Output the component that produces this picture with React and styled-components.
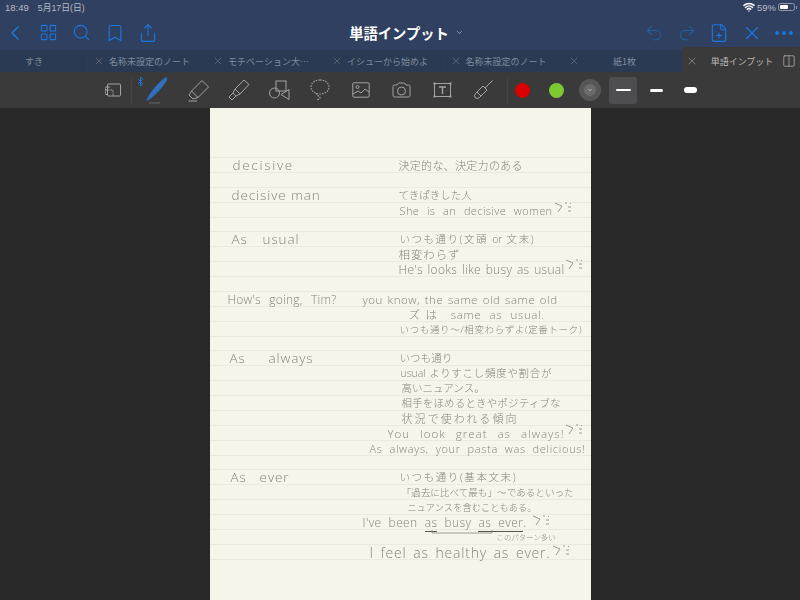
import styled, { createGlobalStyle } from 'styled-components';
import {
  Bluetooth,
  Bookmark,
  ChevronDown,
  ChevronLeft,
  Columns2,
  Ellipsis,
  FilePlus,
  LayoutGrid,
  Redo2,
  Search,
  Share,
  Undo2,
  Wifi,
  X,
} from 'lucide-react';

const GlobalStyle = createGlobalStyle`
  html, body {
    margin: 0;
    padding: 0;
    background: #282828;
    font-family: "Noto Sans CJK JP", "Liberation Sans", sans-serif;
  }
`;

const Page = styled.div`
  display: flex;
  flex-direction: column;
  width: 800px;
  height: 600px;
  overflow: hidden;
  background: #282828;
`;

const Header = styled.div`
  background: #2f4060;
`;

const StatusBar = styled.div`
  display: flex;
  align-items: center;
  box-sizing: border-box;
  height: 15px;
  padding: 0 3px 1px 5px;
  color: #b4bbc8;
  font-family: "Liberation Sans", "Noto Sans CJK JP", sans-serif;
  font-size: 9.5px;
`;

const StatusDate = styled.span`
  margin-left: 9px;
  flex: 1;
  font-size: 8.8px;
`;

const StatusPercent = styled.span`
  margin-left: 2px;
`;

const Battery = styled.div`
  display: flex;
  align-items: center;
  width: 17px;
  height: 8px;
  margin-left: 2px;
  padding: 1px;
  border: 1px solid #8e97a8;
  border-radius: 2.5px;
  box-sizing: border-box;

  &::before {
    content: '';
    display: block;
    width: 59%;
    height: 100%;
    background: #ffffff;
    border-radius: 1px;
  }
`;

const BatteryTip = styled.div`
  width: 1px;
  height: 3px;
  margin-left: 1px;
  background: #8e97a8;
`;

const NavBar = styled.div`
  display: grid;
  grid-template-columns: 1fr auto 1fr;
  align-items: center;
  height: 35px;
`;

const NavGroup = styled.div`
  display: flex;
  align-items: center;
  justify-content: ${(p) => (p.$end ? 'flex-end' : 'flex-start')};
  gap: ${(p) => (p.$end ? '15.5px' : '16px')};
  padding: ${(p) => (p.$end ? '0 7.5px 0 0' : '0 0 0 6px')};
`;

const NavIcon = styled.div`
  display: flex;
  justify-content: center;
  width: ${(p) => p.$w || 17}px;
  color: ${(p) => (p.$dim ? '#235f9f' : '#1b78e0')};

  svg {
    flex-shrink: 0;
  }
`;

const Title = styled.div`
  display: flex;
  align-items: center;
  gap: 6px;
  padding-left: 13px;
  color: #ffffff;
  font-size: 14.3px;
  font-weight: 700;

  svg {
    color: #aab2c0;
  }
`;

const TabBar = styled.div`
  display: flex;
  height: 22px;
  background: #2b3a53;
`;

const Tab = styled.div`
  display: flex;
  align-items: center;
  flex-shrink: 0;
  box-sizing: border-box;
  width: ${(p) => p.$w}px;
  height: ${(p) => (p.$active ? 25 : 22)}px;
  margin-top: ${(p) => (p.$active ? -3 : 0)}px;
  padding: ${(p) => (p.$active ? '3px 4px 0 4px' : '0 12px 0 5px')};
  color: ${(p) => (p.$active ? '#b9b9b9' : '#7f8a9c')};
  background: ${(p) => (p.$active ? '#3a3a3a' : 'transparent')};
  border-right: ${(p) => (p.$active ? 'none' : '1px solid #2d3c56')};
  font-size: 9px;
  white-space: nowrap;

  svg {
    flex-shrink: 0;
  }
`;

const TabLabel = styled.span`
  flex: 1;
  text-align: center;
  padding: 0 ${(p) => p.$r || 0}px 0 ${(p) => p.$l || 0}px;
`;

const Toolbar = styled.div`
  display: flex;
  align-items: center;
  height: 36px;
  padding-left: 93px;
  background: #3a3a3a;
`;

const ToolSlot = styled.div`
  display: flex;
  justify-content: center;
  align-items: center;
  flex-shrink: 0;
  position: relative;
  width: ${(p) => p.$w || 40.7}px;
  height: 36px;
  color: #a3a3a3;
`;

const BtBadge = styled.div`
  display: flex;
  position: absolute;
  left: -2px;
  top: 4px;
  color: #1b78e0;
`;

const ToolDivider = styled.div`
  flex-shrink: 0;
  width: 1px;
  height: 27px;
  margin: 0 ${(p) => p.$r}px 0 ${(p) => p.$l}px;
  background: #444444;
`;

const Swatch = styled.div`
  width: 15px;
  height: 15px;
  border-radius: 50%;
  background: ${(p) => p.$color};
`;

const ColorMore = styled.div`
  display: flex;
  align-items: center;
  justify-content: center;
  width: 22px;
  height: 22px;
  border-radius: 50%;
  background: #565656;

  div {
    display: flex;
    align-items: center;
    justify-content: center;
    width: 12px;
    height: 12px;
    border-radius: 50%;
    background: #6b6b6b;
    color: #d0d0d0;
  }
`;

const WidthBox = styled.div`
  display: flex;
  align-items: center;
  justify-content: center;
  flex-shrink: 0;
  width: 28px;
  height: 27px;
  margin-left: 5px;
  border-radius: 3px;
  background: #4e4e50;
`;

const WidthLine = styled.div`
  width: ${(p) => p.$w}px;
  height: ${(p) => p.$h}px;
  border-radius: ${(p) => p.$h}px;
  background: #ffffff;
`;

const Canvas = styled.div`
  flex: 1;
  display: flex;
  justify-content: center;
  background: #282828;
`;

const Paper = styled.div`
  box-sizing: border-box;
  width: 381px;
  height: 492px;
  padding-top: 49px;
  background: #f6f5e9;
  color: #85857e;
  filter: blur(0.25px);
`;

const Ruled = styled.div`
  border-top: 1px solid #eaebdd;
`;

const Row = styled.div`
  display: grid;
  grid-template-columns: 150px 1fr;
  align-items: end;
  box-sizing: border-box;
  height: 14.89px;
  border-bottom: 1px solid #eaebdd;
  white-space: nowrap;
`;

const Word = styled.span`
  display: block;
  width: ${(p) => p.$w}px;
  height: 15px;
  margin-left: ${(p) => p.$x - 210}px;
  font-family: "Open Sans", "Noto Sans CJK JP", sans-serif;
  font-size: ${(p) => p.$size || 13.5}px;
  font-weight: 300;
  line-height: 15px;
  letter-spacing: ${(p) => p.$ls ?? 0.9}px;
  text-align: justify;
  text-align-last: justify;
`;

const Line = styled.span`
  display: block;
  position: relative;
  width: ${(p) => p.$w}px;
  height: 15px;
  margin-left: ${(p) => p.$x - 360}px;
  font-family: "Open Sans", "Noto Sans CJK JP", sans-serif;
  font-size: ${(p) => p.$size || 10.5}px;
  font-weight: 300;
  line-height: 15px;
  letter-spacing: ${(p) => p.$ls || 0}px;
  text-align: justify;
  text-align-last: justify;
`;

const Marked = styled.span`
  border-bottom: 1.5px solid #55554f;
`;

const Doodle = styled.svg`
  position: absolute;
  left: 100%;
  top: ${(p) => p.$top || 0}px;
  margin-left: ${(p) => p.$gap || 0}px;
  overflow: visible;
  fill: none;
  stroke: #85857e;
  stroke-width: 0.8;
`;

const Bracket = styled.svg`
  position: absolute;
  left: 69px;
  top: 15px;
  overflow: visible;
  fill: none;
  stroke: #85857e;
  stroke-width: 0.8;
`;

function Smile({ gap, top }) {
  return (
    <Doodle $gap={gap} $top={top} width="18" height="14" viewBox="0 0 18 14">
      <path d="M0 1 L7 4 L3 10" />
      <path d="M10 1 l2 0 M15 1 l1 1 M13 5 l3 0 M13 9 l3 0" />
    </Doodle>
  );
}

function LayoutIcon() {
  return (
    <svg width="17" height="15" viewBox="0 0 17 15" fill="none" stroke="currentColor" strokeWidth="1">
      <rect x="3.5" y="1" width="13" height="12" rx="1" />
      <path d="M3.5 7H9V13M6 4H1.5V11.5H3.5M1 7h2.5" strokeDasharray="2 1" />
    </svg>
  );
}

function PenIcon() {
  return (
    <svg width="22" height="28" viewBox="0 0 22 28" fill="none">
      <path d="M1 24 C4 17 11 8 19 2 C21 1 21 3 20 5 C15 13 8 20 2 24 Z" fill="#2c6fc4" stroke="#1b76d8" strokeWidth="0.8" />
      <path d="M4 21 L18 5" stroke="#5e6a78" strokeWidth="0.8" />
      <path d="M3 27 H14" stroke="#757575" strokeWidth="0.8" />
    </svg>
  );
}

function EraserIcon() {
  return (
    <svg width="23" height="23" viewBox="0 0 23 23" fill="none" stroke="currentColor" strokeWidth="1">
      <path d="M15 1.5 L21.5 8 L11 18.5 L4.5 12 Z" strokeLinejoin="round" />
      <path d="M4.5 12 L2 16 L6 20 L11 18.5" />
      <path d="M1.5 22 H10" />
    </svg>
  );
}

function HighlighterIcon() {
  return (
    <svg width="22" height="22" viewBox="0 0 22 22" fill="none" stroke="currentColor" strokeWidth="1">
      <path d="M16 1 L21 5.5 L12 15 L7 10 Z" strokeLinejoin="round" />
      <path d="M7 10 L5 14 L8 17 L12 15 M5 14 L1 18 L4 21 L8 17" />
    </svg>
  );
}

function ShapesIcon() {
  return (
    <svg width="21" height="21" viewBox="0 0 21 21" fill="none" stroke="currentColor" strokeWidth="1">
      <rect x="7" y="1" width="10" height="10" />
      <circle cx="5.5" cy="13" r="5" />
      <path d="M20 9.5 V19.5 L12 14.5 Z" strokeLinejoin="round" />
    </svg>
  );
}

function LassoIcon() {
  return (
    <svg width="20" height="22" viewBox="0 0 20 22" fill="none" stroke="currentColor" strokeWidth="1.1" strokeDasharray="1.6 1.1">
      <path d="M10 1 C15 1 19 4 19 8 C19 12 15 15 10 15 C5 15 1 12 1 8 C1 4 5 1 10 1 Z" />
      <path d="M6 14 C7 17 10 17 10 19 C10 20 8 21 7 20" />
    </svg>
  );
}

function ImageIcon() {
  return (
    <svg width="18" height="16" viewBox="0 0 18 16" fill="none" stroke="currentColor" strokeWidth="1">
      <rect x="0.8" y="0.8" width="16.4" height="14.4" rx="1" />
      <circle cx="5.5" cy="5" r="1.5" />
      <path d="M1 12 L6 9 L9 11 L13 7 L17 10" />
    </svg>
  );
}

function CameraIcon() {
  return (
    <svg width="19" height="16" viewBox="0 0 19 16" fill="none" stroke="currentColor" strokeWidth="1">
      <path d="M1 4.5 Q1 3 2.5 3 H5 L6.5 1 H12.5 L14 3 H16.5 Q18 3 18 4.5 V13.5 Q18 15 16.5 15 H2.5 Q1 15 1 13.5 Z" />
      <circle cx="9.5" cy="9" r="4" />
    </svg>
  );
}

function TextIcon() {
  return (
    <svg width="19" height="16" viewBox="0 0 19 16" fill="none" stroke="currentColor" strokeWidth="1">
      <rect x="1.5" y="1.5" width="16" height="13" />
      <path d="M0.5 1.5h2M16.5 1.5h2M0.5 14.5h2M16.5 14.5h2" strokeWidth="2" />
      <path d="M6 5 H13 M9.5 5 V12" strokeWidth="1.4" />
    </svg>
  );
}

function DropperIcon() {
  return (
    <svg width="20" height="20" viewBox="0 0 20 20" fill="none" stroke="currentColor" strokeWidth="1">
      <path d="M19.5 0.5 L12 8" />
      <path d="M10 6 L14 10 L6.5 17.5 Q4 19.5 2 17.5 Q0.5 15.5 2.5 13.5 Z" />
      <path d="M4 12 L8 16" />
    </svg>
  );
}

const tabs = [
  { w: 88, label: 'すき' },
  { w: 119, label: '名称未設定のノート', x: true },
  { w: 119, label: 'モチベーション大…', x: true },
  { w: 119, label: 'イシューから始めよ', x: true },
  { w: 118, label: '名称未設定のノート', x: true },
  { w: 119, label: '紙1枚', x: true },
];

const tools = [EraserIcon, HighlighterIcon, ShapesIcon, LassoIcon, ImageIcon, CameraIcon, TextIcon, DropperIcon];

export default function App() {
  return (
    <Page>
      <GlobalStyle />
      <Header>
        <StatusBar>
          <span>18:49</span>
          <StatusDate>5月17日(日)</StatusDate>
          <Wifi size={12} strokeWidth={3} color="#ffffff" />
          <StatusPercent>59%</StatusPercent>
          <Battery />
          <BatteryTip />
        </StatusBar>
        <NavBar>
          <NavGroup>
            <NavIcon $w={18}><ChevronLeft size={24} strokeWidth={1.5} /></NavIcon>
            <NavIcon><LayoutGrid size={19} strokeWidth={1.3} /></NavIcon>
            <NavIcon><Search size={19} strokeWidth={1.4} /></NavIcon>
            <NavIcon><Bookmark size={20} strokeWidth={1.3} /></NavIcon>
            <NavIcon><Share size={20} strokeWidth={1.3} /></NavIcon>
          </NavGroup>
          <Title>
            単語インプット
            <ChevronDown size={9} strokeWidth={2} />
          </Title>
          <NavGroup $end>
            <NavIcon $dim><Undo2 size={20} strokeWidth={1.3} /></NavIcon>
            <NavIcon $dim><Redo2 size={20} strokeWidth={1.3} /></NavIcon>
            <NavIcon><FilePlus size={20} strokeWidth={1.3} /></NavIcon>
            <NavIcon><X size={22} strokeWidth={1.3} /></NavIcon>
            <NavIcon><Ellipsis size={24} strokeWidth={1.8} /></NavIcon>
          </NavGroup>
        </NavBar>
      </Header>
      <TabBar>
        {tabs.map((tab, i) => (
          <Tab key={i} $w={tab.w}>
            {tab.x && <X size={12} strokeWidth={1} />}
            <TabLabel $r={tab.x ? 0 : 12}>{tab.label}</TabLabel>
          </Tab>
        ))}
        <Tab $w={118} $active>
          <X size={12} strokeWidth={1} />
          <TabLabel $l={4}>単語インプット</TabLabel>
          <Columns2 size={14} strokeWidth={1.2} />
        </Tab>
      </TabBar>
      <Toolbar>
        <ToolSlot $w={38}><LayoutIcon /></ToolSlot>
        <ToolDivider $l={0} $r={5} />
        <ToolSlot>
          <BtBadge><Bluetooth size={11} strokeWidth={2} /></BtBadge>
          <PenIcon />
        </ToolSlot>
        {tools.map((Icon, i) => (
          <ToolSlot key={i}><Icon /></ToolSlot>
        ))}
        <ToolDivider $l={4} $r={0} />
        <ToolSlot $w={28}><Swatch $color="#d80000" /></ToolSlot>
        <ToolSlot $w={40}><Swatch $color="#7ec832" /></ToolSlot>
        <ToolSlot $w={28}>
          <ColorMore><div><ChevronDown size={6} strokeWidth={3} /></div></ColorMore>
        </ToolSlot>
        <WidthBox><WidthLine $w={15} $h={1.5} /></WidthBox>
        <ToolSlot $w={38}><WidthLine $w={13} $h={3} /></ToolSlot>
        <ToolSlot $w={30}><WidthLine $w={13} $h={6} /></ToolSlot>
      </Toolbar>
      <Canvas>
        <Paper>
          <Ruled>
            <Row>
              <Word $x={233} $w={60} $ls={1.7}>decisive</Word>
              <Line $x={399} $w={124} $size={11}>決定的な、決定力のある</Line>
            </Row>
            <Row />
            <Row>
              <Word $x={232} $w={88}>decisive man</Word>
              <Line $x={399} $w={72}>てきぱきした人</Line>
            </Row>
            <Row>
              <span />
              <Line $x={400} $w={153} $size={11} $ls={0.4}>
                She is an decisive women
                <Smile gap={2} top={-1} />
              </Line>
            </Row>
            <Row />
            <Row>
              <Word $x={232} $w={68}>As usual</Word>
              <Line $x={400} $w={134}>いつも通り(文頭 or 文末)</Line>
            </Row>
            <Row>
              <span />
              <Line $x={399} $w={61} $size={11.5}>相変わらず</Line>
            </Row>
            <Row>
              <span />
              <Line $x={399} $w={166} $size={12} $ls={0.3}>
                He's looks like busy as usual
                <Smile gap={1} top={-3} />
              </Line>
            </Row>
            <Row />
            <Row>
              <Word $x={228} $w={109} $size={12} $ls={0.2}>How's going, Tim?</Word>
              <Line $x={363} $w={195} $size={11.5} $ls={0.5}>you know, the same old same old</Line>
            </Row>
            <Row>
              <span />
              <Line $x={409} $w={136} $size={11.5} $ls={0.6}>ズは same as usual.</Line>
            </Row>
            <Row>
              <span />
              <Line $x={400} $w={182} $size={9.5}>いつも通り〜/相変わらずよ(定番トーク)</Line>
            </Row>
            <Row />
            <Row>
              <Word $x={230} $w={84}>As always</Word>
              <Line $x={400} $w={53}>いつも通り</Line>
            </Row>
            <Row>
              <span />
              <Line $x={401} $w={151}>usual よりすこし頻度や割合が</Line>
            </Row>
            <Row>
              <span />
              <Line $x={402} $w={72}>高いニュアンス。</Line>
            </Row>
            <Row>
              <span />
              <Line $x={402} $w={159}>相手をほめるときやポジティブな</Line>
            </Row>
            <Row>
              <span />
              <Line $x={402} $w={115} $size={11}>状況で使われる傾向</Line>
            </Row>
            <Row>
              <span />
              <Line $x={388} $w={177} $size={11.5} $ls={1}>
                You look great as always!
                <Smile gap={1} top={-2} />
              </Line>
            </Row>
            <Row>
              <span />
              <Line $x={370} $w={216} $size={11} $ls={0.7}>As always, your pasta was delicious!</Line>
            </Row>
            <Row />
            <Row>
              <Word $x={231} $w={59}>As ever</Word>
              <Line $x={400} $w={116}>いつも通り(基本文末)</Line>
            </Row>
            <Row>
              <span />
              <Line $x={402} $w={170} $size={9.6}>「過去に比べて最も」〜であるといった</Line>
            </Row>
            <Row>
              <span />
              <Line $x={408} $w={129} $size={9.2}>ニュアンスを含むこともある。</Line>
            </Row>
            <Row>
              <span />
              <Line $x={363} $w={164} $size={12} $ls={0.4}>
                I've been <Marked>as</Marked> busy <Marked>as ever</Marked>.
                <Smile gap={6} top={0} />
                <Bracket width="60" height="8" viewBox="0 0 60 8">
                  <path d="M0 0 V3 H60 V0" />
                </Bracket>
              </Line>
            </Row>
            <Row>
              <span />
              <Line $x={497} $w={59} $size={7.2}>このパターン多い</Line>
            </Row>
            <Row>
              <span />
              <Line $x={370} $w={181} $size={14} $ls={0.8}>
                I feel as healthy as ever.
                <Smile gap={2} top={0} />
              </Line>
            </Row>
          </Ruled>
        </Paper>
      </Canvas>
    </Page>
  );
}
